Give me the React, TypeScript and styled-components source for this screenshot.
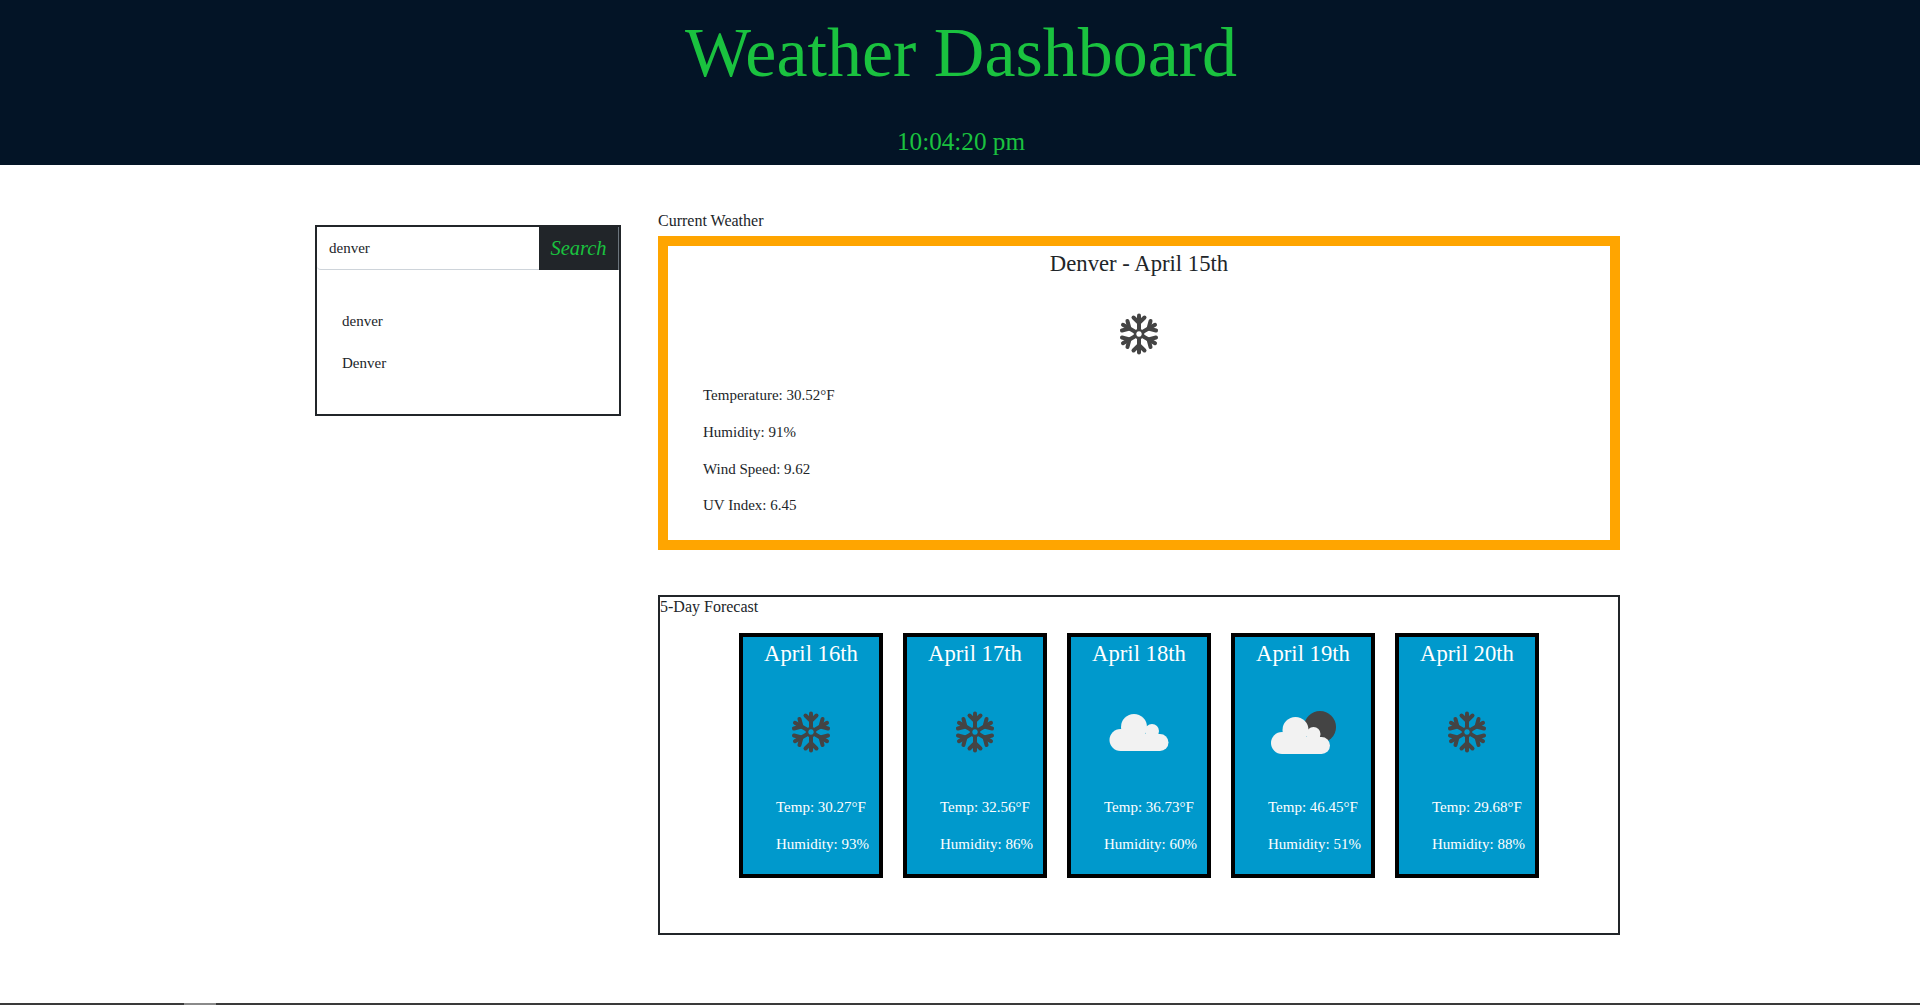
import React from 'react';
import styled, { createGlobalStyle } from 'styled-components';

const GlobalStyle = createGlobalStyle`
  html, body {
    margin: 0;
    padding: 0;
    height: 100%;
    overflow: hidden;
    background: #fff;
    font-family: 'Liberation Serif', 'Times New Roman', serif;
    color: #212529;
  }
  * { box-sizing: border-box; }
`;

const Page = styled.div`
  height: 1005px;
  display: flex;
  flex-direction: column;
`;

const Header = styled.header`
  height: 165px;
  background: #031426;
  color: #1ac23f;
  text-align: center;
  padding: 13px 0 0 2px;
`;

const Title = styled.h1`
  margin: 0;
  font-size: 70px;
  font-weight: 400;
  line-height: 79px;
`;

const Clock = styled.div`
  margin-top: 35px;
  font-size: 25.2px;
  line-height: 30px;
`;

const Content = styled.main`
  flex: 1;
  display: flex;
  align-items: flex-start;
  gap: 37px;
  padding: 44px 300px 0 315px;
`;

const SearchBox = styled.aside`
  flex: 0 0 306px;
  height: 191px;
  margin-top: 16px;
  border: 2px solid #212529;
`;

const SearchRow = styled.div`
  display: flex;
  height: 43px;
`;

const SearchInput = styled.div`
  flex: 1;
  padding: 0 12px;
  font-size: 15px;
  line-height: 43px;
  border-bottom: 1px solid #ced4da;
  border-radius: 0 0 0 4px;
`;

const SearchButton = styled.button`
  width: 80px;
  padding: 0;
  font-family: inherit;
  font-size: 20.5px;
  font-style: italic;
  color: #1ac23f;
  background: #212529;
  border: 1px solid #6c757d;
  border-width: 0 1px 0 0;
`;

const HistoryList = styled.ul`
  list-style: none;
  margin: 0;
  padding: 41px 0 0 25px;
`;

const HistoryItem = styled.li`
  font-size: 15px;
  line-height: 21.6px;
  margin-bottom: 20.5px;
`;

const Column = styled.div`
  flex: 0 0 962px;
  display: flex;
  flex-direction: column;
`;

const SectionLabel = styled.div`
  font-size: 16px;
  line-height: 24px;
  height: 27px;
`;

const CurrentPanel = styled.section`
  height: 314px;
  border: 10px solid #ffa500;
  padding-top: 4px;
`;

const CurrentTitle = styled.h4`
  margin: 0;
  font-size: 22.7px;
  font-weight: 400;
  line-height: 27px;
  text-align: center;
`;

const IconSlot = styled.div`
  display: flex;
  justify-content: center;
  height: 80px;
`;

const CurrentIconSlot = styled(IconSlot)`
  margin-top: 17px;
`;

const CurrentStats = styled.div`
  padding: 11px 0 0 35px;
`;

const Stat = styled.p`
  margin: 0 0 15px;
  font-size: 15px;
  line-height: 21.75px;
`;

const ForecastPanel = styled.section`
  height: 340px;
  margin-top: 45px;
  border: 2px solid #212529;
`;

const ForecastLabel = styled.div`
  font-size: 16px;
  line-height: 20px;
`;

const CardRow = styled.div`
  display: flex;
  justify-content: center;
  gap: 20px;
  margin-top: 16px;
`;

const Card = styled.article`
  width: 144px;
  height: 245px;
  border: 4px solid #000;
  background: #0099cc;
  color: #fff;
`;

const CardDate = styled.h4`
  margin: 0;
  padding-top: 3px;
  font-size: 22.7px;
  font-weight: 400;
  line-height: 27px;
  text-align: center;
`;

const CardIconSlot = styled(IconSlot)`
  margin-top: 25px;
`;

const CardStats = styled.div`
  padding: 25px 0 0 33px;
`;

const CardStat = styled(Stat)`
  white-space: nowrap;
`;

const ScrollTrack = styled.div`
  height: 2px;
  background: #3a3a3a;
  display: flex;
  padding-left: 184px;
`;

const ScrollThumb = styled.div`
  width: 32px;
  background: #8a8a8a;
`;

const DARK = '#444444';
const LIGHT = '#f2f2f2';

// one arm of the flake, rotated six times round the centre
const SnowIcon = () => (
  <svg width="80" height="80" viewBox="0 0 80 80">
    <g stroke={DARK} strokeWidth="4" strokeLinecap="round" fill="none">
      {[0, 60, 120, 180, 240, 300].map((a) => (
        <g key={a} transform={`rotate(${a} 40 40)`}>
          <path d="M40 35V21.5" />
          <path d="M34.5 23.5l5.5 5.5 5.5-5.5" />
        </g>
      ))}
      <circle cx="40" cy="40" r="4" strokeWidth="2.6" />
    </g>
  </svg>
);

const CloudShape = () => (
  <g fill={LIGHT}>
    <circle cx="21.5" cy="48" r="11" />
    <circle cx="35" cy="35" r="13" />
    <circle cx="53" cy="39" r="7" />
    <circle cx="61" cy="50.5" r="8.5" />
    <rect x="21.5" y="42" width="39.5" height="17" />
  </g>
);

const CloudIcon = () => (
  <svg width="80" height="80" viewBox="0 0 80 80">
    <CloudShape />
  </svg>
);

const CloudMoonIcon = () => (
  <svg width="80" height="80" viewBox="0 0 80 80">
    <circle cx="57" cy="35" r="16" fill={DARK} />
    <g transform="translate(-2.5 3)">
      <CloudShape />
    </g>
  </svg>
);

type Day = { date: string; temp: string; humidity: string; icon: React.ReactNode };

const days: Day[] = [
  { date: 'April 16th', temp: '30.27', humidity: '93', icon: <SnowIcon /> },
  { date: 'April 17th', temp: '32.56', humidity: '86', icon: <SnowIcon /> },
  { date: 'April 18th', temp: '36.73', humidity: '60', icon: <CloudIcon /> },
  { date: 'April 19th', temp: '46.45', humidity: '51', icon: <CloudMoonIcon /> },
  { date: 'April 20th', temp: '29.68', humidity: '88', icon: <SnowIcon /> },
];

const App = () => {
  return (
    <Page>
      <GlobalStyle />
      <Header>
        <Title>Weather Dashboard</Title>
        <Clock>10:04:20 pm</Clock>
      </Header>
      <Content>
        <SearchBox>
          <SearchRow>
            <SearchInput>denver</SearchInput>
            <SearchButton>Search</SearchButton>
          </SearchRow>
          <HistoryList>
            <HistoryItem>denver</HistoryItem>
            <HistoryItem>Denver</HistoryItem>
          </HistoryList>
        </SearchBox>
        <Column>
          <SectionLabel>Current Weather</SectionLabel>
          <CurrentPanel>
            <CurrentTitle>Denver - April 15th</CurrentTitle>
            <CurrentIconSlot>
              <SnowIcon />
            </CurrentIconSlot>
            <CurrentStats>
              <Stat>Temperature: 30.52°F</Stat>
              <Stat>Humidity: 91%</Stat>
              <Stat>Wind Speed: 9.62</Stat>
              <Stat>UV Index: 6.45</Stat>
            </CurrentStats>
          </CurrentPanel>
          <ForecastPanel>
            <ForecastLabel>5-Day Forecast</ForecastLabel>
            <CardRow>
              {days.map((d) => (
                <Card key={d.date}>
                  <CardDate>{d.date}</CardDate>
                  <CardIconSlot>{d.icon}</CardIconSlot>
                  <CardStats>
                    <CardStat>Temp: {d.temp}°F</CardStat>
                    <CardStat>Humidity: {d.humidity}%</CardStat>
                  </CardStats>
                </Card>
              ))}
            </CardRow>
          </ForecastPanel>
        </Column>
      </Content>
      <ScrollTrack>
        <ScrollThumb />
      </ScrollTrack>
    </Page>
  );
};

export default App;
